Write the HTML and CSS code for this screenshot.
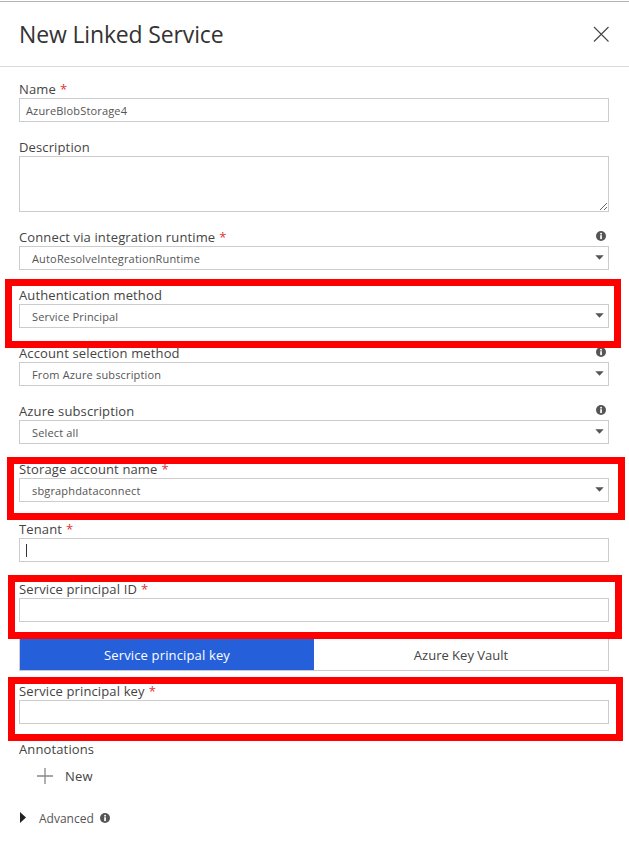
FILE: index.html
```html
<!DOCTYPE html>
<html lang="en">
<head>
<meta charset="utf-8">
<title>New Linked Service</title>
<link rel="stylesheet" href="styles.css">
</head>
<body>
<svg class="defs" width="0" height="0" aria-hidden="true">
  <symbol id="info" viewBox="0 0 10 10"><circle cx="5" cy="5" r="5" fill="#555"/><rect x="4.2" y="4.2" width="1.7" height="3.9" fill="#fff"/><rect x="4.2" y="1.9" width="1.7" height="1.6" fill="#fff"/></symbol>
  <symbol id="caret" viewBox="0 0 9 5"><path d="M0.3 0.3H8.7L4.5 4.8Z" fill="#555"/></symbol>
</svg>
<main class="panel">
  <header class="head">
    <h1 class="title">New Linked Service</h1>
    <svg class="close" width="16" height="16" viewBox="0 0 16 16"><path d="M1 1L15.500 15.500M15.500 1L1 15.500" stroke="#444" stroke-width="1.1" fill="none"/></svg>
  </header>
  <form class="form">
    <div class="field">
      <div class="label"><span>Name</span><span class="req">*</span></div>
      <div class="input">AzureBlobStorage4</div>
    </div>
    <div class="field">
      <div class="label"><span>Description</span></div>
      <textarea class="area" aria-label="Description"></textarea>
    </div>
    <div class="field">
      <div class="label"><span>Connect via integration runtime</span><span class="req">*</span><svg class="info"><use href="#info"/></svg></div>
      <div class="select"><span>AutoResolveIntegrationRuntime</span><svg class="caret"><use href="#caret"/></svg></div>
    </div>
    <div class="field">
      <div class="label"><span>Authentication method</span></div>
      <div class="select"><span>Service Principal</span><svg class="caret"><use href="#caret"/></svg></div>
    </div>
    <div class="field">
      <div class="label"><span>Account selection method</span><svg class="info"><use href="#info"/></svg></div>
      <div class="select"><span>From Azure subscription</span><svg class="caret"><use href="#caret"/></svg></div>
    </div>
    <div class="field">
      <div class="label"><span>Azure subscription</span><svg class="info"><use href="#info"/></svg></div>
      <div class="select"><span>Select all</span><svg class="caret"><use href="#caret"/></svg></div>
    </div>
    <div class="field field-wide">
      <div class="label"><span>Storage account name</span><span class="req">*</span></div>
      <div class="select"><span>sbgraphdataconnect</span><svg class="caret"><use href="#caret"/></svg></div>
    </div>
    <div class="field field-wide">
      <div class="label"><span>Tenant</span><span class="req">*</span></div>
      <div class="input"><span class="cursor"></span></div>
    </div>
    <div class="field field-tight">
      <div class="label"><span>Service principal ID</span><span class="req">*</span></div>
      <div class="input"></div>
    </div>
    <div class="toggle">
      <div class="tab tab-on">Service principal key</div>
      <div class="tab">Azure Key Vault</div>
    </div>
    <div class="field">
      <div class="label"><span>Service principal key</span><span class="req">*</span></div>
      <div class="input"></div>
    </div>
    <div class="label"><span>Annotations</span></div>
    <div class="add">
      <svg class="plus" width="16" height="16" viewBox="0 0 16 16"><path d="M8 0V16M0 8H16" stroke="#888" stroke-width="1.3" fill="none"/></svg>
      <span class="add-text">New</span>
    </div>
    <div class="adv">
      <svg class="tri" width="6" height="11" viewBox="0 0 6 11"><path d="M0 0L6 5.500L0 11Z" fill="#222"/></svg>
      <span class="adv-text">Advanced</span>
      <svg class="info info-inline"><use href="#info"/></svg>
    </div>
  </form>
</main>
<div class="mark mark-auth"></div>
<div class="mark mark-storage"></div>
<div class="mark mark-id"></div>
<div class="mark mark-key"></div>
</body>
</html>
```

FILE: styles.css
```css
* { box-sizing: border-box; }
html, body { margin: 0; padding: 0; background: #fff; }
body {
  position: relative;
  width: 629px;
  height: 868px;
  overflow: hidden;
  font-family: "Open Sans", "Noto Sans", sans-serif;
  color: #444;
}
.defs { position: absolute; }
.panel { border-top: 1px solid #b4b4b4; margin-top: 1px; }
.head {
  height: 65px;
  border-bottom: 1px solid #d9d9d9;
  padding: 0 20px 0 19px;
  display: flex;
  align-items: center;
  justify-content: space-between;
}
.title {
  margin: 0;
  font-size: 23px;
  font-weight: 400;
  color: #333;
  letter-spacing: -0.15px;
}
.close { margin-top: -1px; }
.form { padding: 11px 20px 0 19px; }
.field { margin-bottom: 14px; }
.field-wide { margin-bottom: 16px; }
.field-tight { margin-bottom: 17px; }
.label {
  height: 20px;
  display: flex;
  align-items: center;
  gap: 4px;
  font-size: 13px;
  line-height: 20px;
  letter-spacing: 0.13px;
  color: #444;
}
.label > span { position: relative; top: 1px; }
.req { color: #d33; }
.info { width: 10px; height: 10px; margin-left: auto; margin-right: 3px; }
.input, .select {
  height: 24px;
  border: 1px solid #ccc;
  background: #fff;
  padding-top: 1px;
  font-size: 11px;
  letter-spacing: 0.16px;
  color: #555;
  display: flex;
  align-items: center;
}
.input { padding-left: 6px; }
.select { padding-left: 12px; justify-content: space-between; padding-right: 4px; }
.caret { width: 9px; height: 5px; margin-top: -2px; }
.cursor { width: 1px; height: 13px; background: #333; }
.area {
  display: block;
  width: 100%;
  height: 56px;
  border: 1px solid #ccc;
  border-radius: 0;
  outline: none;
  margin: 0;
  padding: 4px 6px;
  background: #fff;
  font: inherit;
}
.toggle {
  display: grid;
  grid-template-columns: 294px 1fr;
  height: 32px;
  border: 1px solid #ccc;
  border-top: 0;
  margin-bottom: 9px;
  font-size: 13px;
}
.tab {
  display: flex;
  align-items: center;
  justify-content: center;
  color: #444;
}
.tab-on { background: #2560da; color: #fff; font-weight: 500; letter-spacing: 0.15px; }
.add {
  height: 32px;
  margin-top: 2px;
  padding-left: 18px;
  display: flex;
  align-items: center;
  gap: 12px;
}
.add-text { font-size: 13px; font-weight: 500; letter-spacing: 0.2px; color: #444; }
.adv {
  margin-top: 16px;
  height: 20px;
  padding-left: 1px;
  display: flex;
  align-items: center;
}
.tri { margin-right: 13px; margin-top: -2px; }
.adv-text { font-size: 12px; color: #555; }
.info-inline { margin-left: 6px; margin-right: 0; margin-top: -1px; }
.mark {
  position: absolute;
  border: 7px solid #f00;
}
.mark-auth { left: 5px; top: 279px; width: 616px; height: 69px; }
.mark-storage { left: 7px; top: 457px; width: 618px; height: 63px; }
.mark-id { left: 8px; top: 575px; width: 614px; height: 64px; }
.mark-key { left: 8px; top: 677px; width: 615px; height: 64px; }
```
